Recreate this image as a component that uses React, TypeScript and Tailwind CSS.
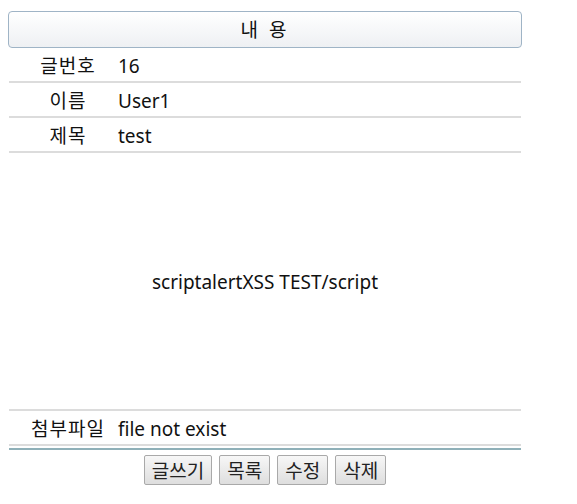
import React from 'react';

const rows = [
  { label: '글번호', value: '16' },
  { label: '이름', value: 'User1' },
  { label: '제목', value: 'test' },
];

const buttons = ['글쓰기', '목록', '수정', '삭제'];

function Row({ label, value }: { label: string; value: string }) {
  return (
    <div className="flex items-center h-[35px] pt-[4px] border-b-2 border-[#dcdcdc]">
      <div className="w-[100px] ml-[9px] text-center tracking-[1px]">{label}</div>
      <div className="pl-[0px]">{value}</div>
    </div>
  );
}

export default function App() {
  return (
    <div
      className="w-[577px] h-[504px] bg-white text-[19px] text-[#111] pt-[11px] pl-[8px]"
      style={{ fontFamily: '"Noto Sans", "Noto Sans CJK KR", sans-serif' }}
    >
      <div className="w-[514px]">
        {/* title bar */}
        <div className="h-[37px] flex items-center justify-center pt-[2px] rounded-[4px] border border-[#9fb4c6] bg-gradient-to-b from-white to-[#eef0f3] tracking-[3px]">
          내 용
        </div>

        <div className="ml-[1px] w-[512px]">
          {rows.map((r) => (
            <Row key={r.label} label={r.label} value={r.value} />
          ))}

          {/* body */}
          <div className="h-[258px] flex items-center justify-center pt-[3px] border-b-2 border-[#dcdcdc]">
            scriptalertXSS TEST/script
          </div>

          <Row label="첨부파일" value="file not exist" />
          <div className="mt-[2px] h-[2px] bg-[#8fb0b8]" />
        </div>

        {/* actions */}
        <div className="flex justify-center gap-[7px] mt-[5px]">
          {buttons.map((b) => (
            <button
              key={b}
              className="h-[30px] px-[7px] pt-[2px] leading-none border border-[#a9a9a9] rounded-[2px] bg-gradient-to-b from-[#f7f7f7] to-[#dedede] text-[19px] text-[#222]"
            >
              {b}
            </button>
          ))}
        </div>
      </div>
    </div>
  );
}
